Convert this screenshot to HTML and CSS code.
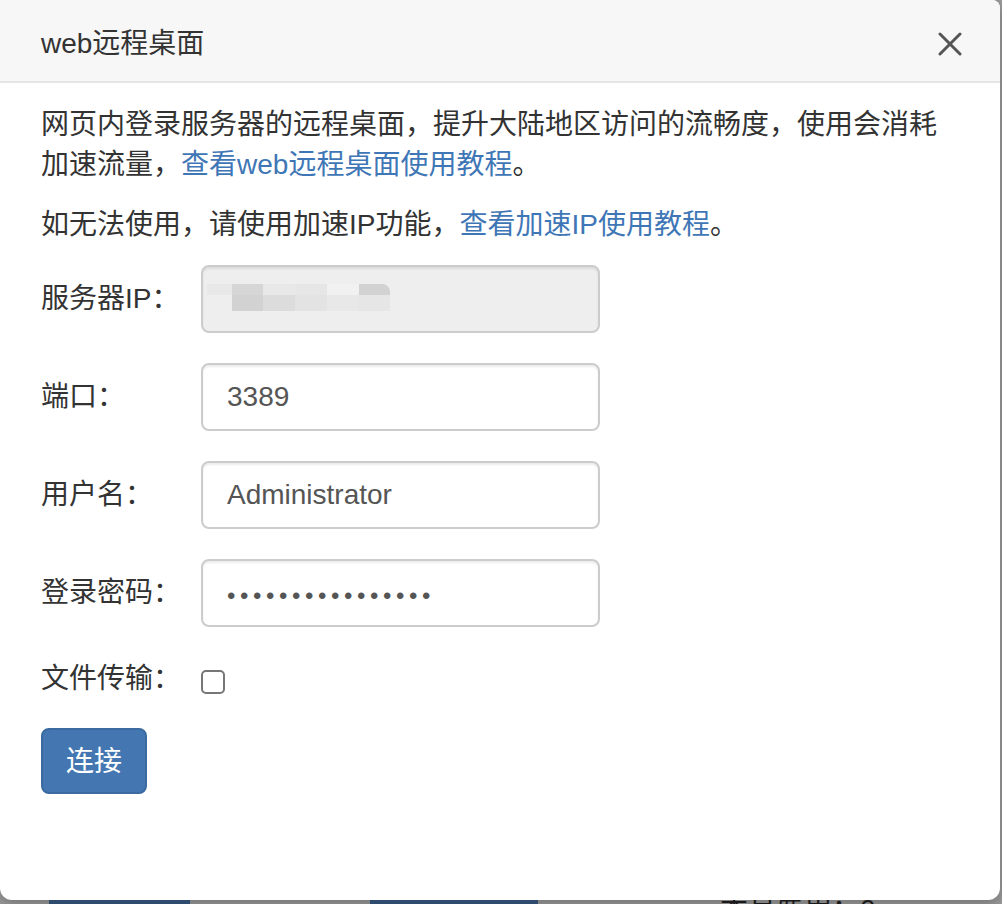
FILE: index.html
```html
<!DOCTYPE html>
<html lang="zh-CN">
<head>
  <meta charset="UTF-8" />
  <title>web远程桌面</title>
  <meta name="viewport" content="width=device-width, initial-scale=1.0" />
  <link rel="stylesheet" href="styles.css">
</head>
<body>
  <div class="modal">
    <div class="modal-header">
      <h4 class="modal-title">web远程桌面</h4>
      <button class="close" type="button" aria-label="关闭">
        <svg width="24" height="24" viewBox="0 0 24 24">
          <path d="M2 2 L22 22 M22 2 L2 22" stroke="#555" stroke-width="3" stroke-linecap="round" />
        </svg>
      </button>
    </div>

    <div class="modal-body">
      <p>网页内登录服务器的远程桌面，提升大陆地区访问的流畅度，使用会消耗加速流量，<a href="#">查看web远程桌面使用教程</a>。</p>
      <p>如无法使用，请使用加速IP功能，<a href="#">查看加速IP使用教程</a>。</p>

      <form class="rdp-form">
        <div class="form-row">
          <label>服务器IP：</label>
          <div class="field">
            <input class="form-control" type="text" value="" disabled>
            <!-- blurred-out address -->
            <div class="mosaic">
              <span class="m-a"></span><span class="m-d"></span><span class="m-a"></span><span class="m-b"></span><span class="m-e"></span><span class="m-c corner"></span>
              <span class="m-none"></span><span class="m-c"></span><span class="m-f"></span><span class="m-g"></span><span class="m-a"></span><span class="m-b"></span>
            </div>
          </div>
        </div>
        <div class="form-row">
          <label>端口：</label>
          <input class="form-control" type="text" value="3389">
        </div>
        <div class="form-row">
          <label>用户名：</label>
          <input class="form-control" type="text" value="Administrator">
        </div>
        <div class="form-row">
          <label>登录密码：</label>
          <input class="form-control password" type="password" value="abcdefghijklmnop">
        </div>
        <div class="form-row check-row">
          <label>文件传输：</label>
          <input class="checkbox" type="checkbox">
        </div>
        <button class="btn btn-primary" type="button">连接</button>
      </form>
    </div>
  </div>

  <!-- page behind the backdrop -->
  <div class="page-under">
    <span class="under-btn first"></span>
    <span class="under-btn second"></span>
    <span class="under-text">本月费用：0元</span>
  </div>
</body>
</html>
```

FILE: styles.css
```css
* {
  box-sizing: border-box;
}

body {
  margin: 0;
  height: 904px;
  overflow: hidden;
  background: #9a9a9a;
  font-family: "Liberation Sans", "Noto Sans CJK SC", sans-serif;
  font-size: 28px;
  line-height: 40px;
  color: #333;
}

.modal {
  width: 1000px;
  height: 900px;
  background: #fff;
  border-radius: 0 8px 12px 12px;
  box-shadow: 0 4px 14px rgba(0, 0, 0, 0.25);
  overflow: hidden;
}

.modal-header {
  height: 83px;
  display: flex;
  align-items: center;
  justify-content: space-between;
  padding: 7px 38px 0 41px;
  background: #f7f7f7;
  border-bottom: 2px solid #e5e5e5;
}

.modal-title {
  margin: 0;
  font-size: 28px;
  font-weight: normal;
  line-height: 40px;
}

.close {
  padding: 0;
  border: none;
  background: none;
  display: flex;
  cursor: pointer;
}

.modal-body {
  padding: 22px 41px 0;
}

.modal-body p {
  margin: 0 0 20px;
}

.modal-body a {
  color: #3f77b6;
  text-decoration: none;
}

.form-row {
  display: flex;
  align-items: center;
  margin-bottom: 30px;
}

.form-row label {
  width: 160px;
  flex-shrink: 0;
}

.field {
  position: relative;
}

.form-control {
  width: 399px;
  height: 68px;
  padding: 0 24px;
  border: 2px solid #ccc;
  border-radius: 8px;
  box-shadow: inset 0 2px 2px rgba(0, 0, 0, 0.075);
  font-family: inherit;
  font-size: 28px;
  color: #555;
  background: #fff;
  outline: none;
}

.form-control:disabled {
  background: #eee;
}

.password {
  padding-top: 6px;
  letter-spacing: 4.6px;
  font-size: 24px;
}

/* pixelated address over the disabled field */
.mosaic {
  position: absolute;
  left: 6px;
  top: 19px;
  display: grid;
  grid-template-columns: 25px 31px 32px 32px 32px 31px;
  grid-template-rows: 11px 16px;
}

.m-a { background: #e8e8e8; }
.m-b { background: #e6e6e6; }
.m-c { background: #d2d2d2; }
.m-d { background: #d6d6d6; }
.m-e { background: #f1f1f1; }
.m-f { background: #dcdcdc; }
.m-g { background: #e3e3e3; }
.corner { border-top-right-radius: 8px; }

.check-row {
  height: 44px;
  margin-bottom: 27px;
}

.checkbox {
  appearance: none;
  width: 24px;
  height: 24px;
  margin: 6px 0 0 0;
  border: 2px solid #767676;
  border-radius: 5px;
  background: #fff;
}

.btn {
  padding: 12px 23px 10px;
  border: 2px solid #3a6aa0;
  border-radius: 8px;
  font-family: inherit;
  font-size: 28px;
  line-height: 40px;
  cursor: pointer;
}

.btn-primary {
  background: #4477b1;
  color: #fff;
}

.page-under {
  height: 4px;
  display: flex;
  overflow: hidden;
}

.under-btn {
  height: 4px;
  background: #2e4a6e;
}

.under-btn.first {
  margin-left: 49px;
  width: 141px;
}

.under-btn.second {
  margin-left: 180px;
  width: 168px;
}

.under-text {
  margin: -4px 0 0 182px;
  font-size: 28px;
  line-height: 28px;
  color: #1a1a1a;
}
```
